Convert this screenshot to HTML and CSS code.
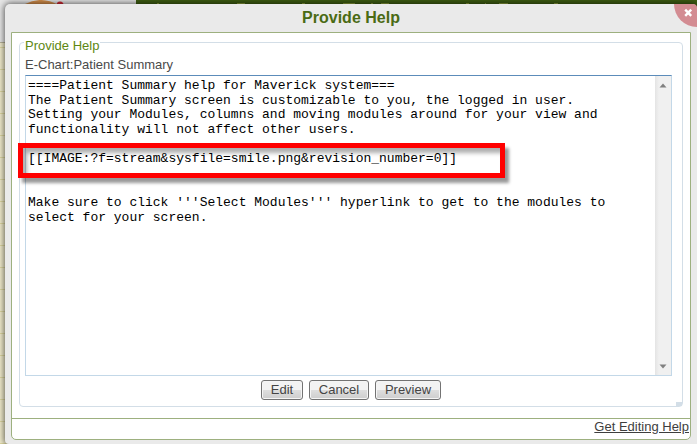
FILE: index.html
```html
<!DOCTYPE html>
<html lang="en">
<head>
<meta charset="utf-8">
<title>Provide Help</title>
<link rel="stylesheet" href="styles.css">
</head>
<body>
<div class="backdrop">
  <div class="site-header">
    <div class="logo"><svg width="60" height="43" viewBox="0 0 60 43"><path d="M0 7Q15-2 32 7" fill="none" stroke="#d9924c" stroke-width="5"/><circle cx="35" cy="5" r="3.5" fill="#d52b35"/></svg></div>
    <div class="nav"><svg width="561" height="5" viewBox="0 0 561 5"><path d="M21 3.5h2M101 3.5h8M166 3.5h3M207 3.5h12M235 3.5h2M245 3.5h8M330 3.5h3M349 3.5h1M363 3.5h9M418 3.5h4" stroke="#8fa23c"/></svg></div>
  </div>
  <div class="site-page"></div>
</div>
<section class="dialog">
  <header class="dialog-title">Provide Help</header>
  <button class="close" aria-label="Close"><svg width="23" height="23" viewBox="0 0 23 23"><path d="M11.2 5.6l6 6.2M17.2 5.6l-6 6.2" stroke="#fff" stroke-width="2.4"/></svg></button>
  <div class="dialog-body">
    <div class="group">
      <div class="legend">Provide Help</div>
      <div class="subject">E-Chart:Patient Summary</div>
      <div class="editor">
        <div class="source">====Patient Summary help for Maverick system===
The Patient Summary screen is customizable to you, the logged in user.
Setting your Modules, columns and moving modules around for your view and
functionality will not affect other users.

[[IMAGE:?f=stream&amp;sysfile=smile.png&amp;revision_number=0]]


Make sure to click '''Select Modules''' hyperlink to get to the modules to
select for your screen.</div>
        <div class="scrollbar">
          <svg width="8" height="5" viewBox="0 0 8 5"><path d="M.5 4.5L4 .5l3.5 4z" fill="#808080"/></svg>
          <svg width="8" height="5" viewBox="0 0 8 5"><path d="M.5.5h7L4 4.5z" fill="#808080"/></svg>
        </div>
        <div class="highlight"></div>
      </div>
      <div class="actions">
        <button class="btn edit">Edit</button>
        <button class="btn cancel">Cancel</button>
        <button class="btn preview">Preview</button>
      </div>
      <span class="corner"></span>
    </div>
    <footer class="dialog-foot"><a class="help-link">Get Editing Help</a></footer>
  </div>
</section>
</body>
</html>
```
FILE: styles.css
```css
* { box-sizing: border-box; }
body {
  margin: 0;
  width: 697px;
  height: 444px;
  overflow: hidden;
  position: relative;
  font: 13px/15px "Liberation Sans", Arial, sans-serif;
  color: #4a4a4a;
}
.backdrop { position: absolute; inset: 0; }
.site-header { display: flex; height: 43px; background: #e6e6e6; border-bottom: 1px solid #b8b39b; }
.logo { width: 136px; padding-left: 25px; overflow: hidden; }
.nav { flex: 1; background: #3f5f12; }
.nav svg, .logo svg { display: block; }
.site-page {
  height: 401px;
  background: repeating-linear-gradient(#f0ebcc 0 4px, #ddd7a2 4px 5px, #f0ebcc 5px 22px);
}
.dialog {
  position: absolute;
  left: 5px;
  top: 4px;
  width: 692px;
  height: 440px;
  padding: 0 6px 4px;
  background: #eaeaea;
  border-radius: 5px 5px 0 4px;
  box-shadow: 0 0 6px 1px rgba(0, 0, 0, .6);
}
.dialog-title {
  height: 28px;
  font-size: 16px;
  font-weight: bold;
  line-height: 27px;
  text-align: center;
  color: #4a6b14;
}
.close {
  position: absolute;
  right: 0;
  top: 0;
  width: 23px;
  height: 23px;
  padding: 0;
  border: 0;
  border-radius: 0 4px 0 23px;
  background: #d38c92;
}
.close svg { display: block; }
.dialog-body {
  display: flex;
  flex-direction: column;
  height: 408px;
  background: #fff;
  border: 1px solid #9db07f;
  border-radius: 0 0 5px 5px;
  padding-top: 9px;
}
.group {
  position: relative;
  width: 664px;
  height: 365px;
  margin-left: 7px;
  padding: 0 5px;
  border: 1px solid #d3dee7;
  border-radius: 4px;
}
.legend {
  width: 76px;
  height: 15px;
  margin: -5px 0 0 -1px;
  padding-left: 1px;
  background: #fff;
  color: #5e8712;
}
.subject { height: 18px; padding: 4px 0 0; margin-bottom: 4px; }
.editor {
  position: relative;
  display: flex;
  width: 647px;
  height: 301px;
  border: 1px solid #c3d8e8;
  border-top-color: #5c8cba;
}
.source {
  flex: 1;
  padding: 3px 2px 2px;
  font: 13px/14.67px "Liberation Mono", "Courier New", monospace;
  white-space: pre;
  color: #000;
}
.scrollbar {
  display: flex;
  flex-direction: column;
  justify-content: space-between;
  align-items: center;
  width: 16px;
  padding: 7px 0 6px;
  background: linear-gradient(90deg, #e4e4e4, #f0f0f0 4px);
}
.highlight {
  position: absolute;
  left: -8px;
  top: 67px;
  width: 487px;
  height: 35px;
  border: 5px solid #f00;
  box-shadow: 4px 5px 3px rgba(0, 0, 0, .4), inset 4px 5px 4px rgba(0, 0, 0, .32);
}
.actions { display: flex; gap: 6px; margin-top: 4px; padding-left: 236px; }
.btn {
  height: 20px;
  padding: 0 0 1px;
  border: 1px solid #737373;
  border-radius: 3px;
  background: linear-gradient(#f3f3f3 0 48%, #dedede 52%, #cdcdcd);
  box-shadow: inset 0 0 0 1px #f5f5f5;
  font: inherit;
  color: #444;
}
.edit { width: 42px; }
.cancel { width: 60px; }
.preview { width: 66px; }
.corner { position: absolute; right: 0; bottom: 0; width: 6px; height: 4px; background: #d3dee7; }
.dialog-foot {
  flex: 1;
  margin-top: 11px;
  padding: 0 1px 0;
  border-top: 1px solid #9db07f;
  text-align: right;
}
.help-link { text-decoration: underline; color: #3e3e3e; }
```
